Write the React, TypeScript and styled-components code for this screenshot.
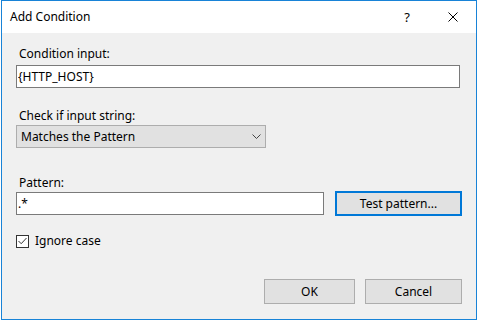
import React from 'react';
import styled, { createGlobalStyle } from 'styled-components';

const GlobalStyle = createGlobalStyle`
  body {
    margin: 0;
    background: #fff;
    font-family: "Segoe UI", "Noto Sans", "Open Sans", sans-serif;
    font-size: 12px;
    color: #000;
  }
`;

const Window = styled.div`
  box-sizing: border-box;
  margin-left: 1px;
  width: 476px;
  height: 320px;
  border: 1px solid #1883d7;
  background: #f0f0f0;
  display: flex;
  flex-direction: column;
`;

const TitleBar = styled.div`
  height: 32px;
  background: #fff;
  display: flex;
  align-items: center;
  padding-left: 8px;
`;

const Title = styled.span`
  flex: 1;
  font-size: 12px;
  padding-bottom: 2px;
`;

const TitleButton = styled.div<{ $w: number }>`
  width: ${(p) => p.$w}px;
  height: 32px;
  display: flex;
  align-items: center;
  justify-content: center;
  font-size: 13px;
`;

const Content = styled.div`
  flex: 1;
  padding: 13px 14px 0 14px;
  display: flex;
  flex-direction: column;
`;

const Label = styled.div<{ $gap?: number }>`
  line-height: 16px;
  padding-left: 3px;
  margin-top: ${(p) => p.$gap || 0}px;
  margin-bottom: 3px;
`;

const TextBox = styled.input<{ $w: number }>`
  box-sizing: border-box;
  width: ${(p) => p.$w}px;
  height: 23px;
  border: 1px solid #7a7a7a;
  background: #fff;
  padding: 0 1px;
  margin: 0;
  font: inherit;
  color: #000;
  outline: none;
`;

const Select = styled.div`
  box-sizing: border-box;
  width: 250px;
  height: 23px;
  border: 1px solid #adadad;
  background: #e1e1e1;
  display: flex;
  align-items: center;
  justify-content: space-between;
  padding: 0 4px 0 4px;
  margin-top: -2px;
`;

const Row = styled.div<{ $gap?: number }>`
  display: flex;
  align-items: center;
  gap: 11px;
  margin-top: ${(p) => p.$gap || 0}px;
`;

const Button = styled.button<{ $w: number; $focused?: boolean }>`
  box-sizing: border-box;
  width: ${(p) => p.$w}px;
  height: 25px;
  background: #e1e1e1;
  border: ${(p) => (p.$focused ? '2px solid #0078d7' : '1px solid #adadad')};
  font: inherit;
  color: #000;
  padding: 0;
  margin: 0;
`;

const CheckRow = styled.label`
  display: flex;
  align-items: center;
  gap: 6px;
  line-height: 16px;
  margin-top: 17px;
`;

const CheckBox = styled.span`
  box-sizing: border-box;
  width: 13px;
  height: 13px;
  border: 1px solid #333;
  background: #fff;
  display: flex;
  align-items: center;
  justify-content: center;
`;

const Footer = styled.div`
  display: flex;
  justify-content: flex-end;
  gap: 10px;
  margin-top: 30px;
`;

export default function App() {
  return (
    <>
      <GlobalStyle />
      <Window>
        <TitleBar>
          <Title>Add Condition</Title>
          <TitleButton $w={46}>?</TitleButton>
          <TitleButton $w={46}>
            <svg width="10" height="10" viewBox="0 0 10 10">
              <path d="M0.5 0.5 L9.5 9.5 M9.5 0.5 L0.5 9.5" stroke="#000" strokeWidth="1" />
            </svg>
          </TitleButton>
        </TitleBar>
        <Content>
          <Label>Condition input:</Label>
          <TextBox $w={444} defaultValue="{HTTP_HOST}" readOnly />
          <Label $gap={20}>Check if input string:</Label>
          <Select>
            <span>Matches the Pattern</span>
            <svg width="9" height="5" viewBox="0 0 9 5">
              <path d="M0.5 0.5 L4.5 4.5 L8.5 0.5" stroke="#444" strokeWidth="1" fill="none" />
            </svg>
          </Select>
          <Label $gap={27}>Pattern:</Label>
          <Row $gap={-3}>
            <TextBox $w={308} defaultValue=".*" readOnly />
            <Button $w={127} $focused>Test pattern...</Button>
          </Row>
          <CheckRow>
            <CheckBox>
              <svg width="9" height="8" viewBox="0 0 9 8">
                <path d="M0.5 4 L3.2 6.7 L8.5 1" stroke="#333" strokeWidth="1" fill="none" />
              </svg>
            </CheckBox>
            Ignore case
          </CheckRow>
          <Footer>
            <Button $w={91}>OK</Button>
            <Button $w={97}>Cancel</Button>
          </Footer>
        </Content>
      </Window>
    </>
  );
}
